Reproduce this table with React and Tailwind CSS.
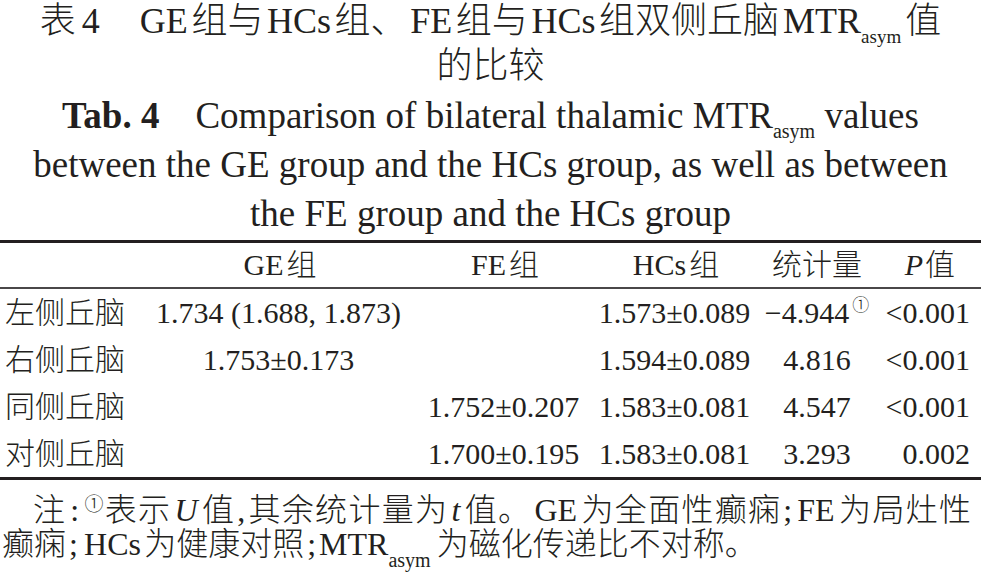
import React from "react";

const rows = [
  { label: "左侧丘脑", ge: "1.734 (1.688, 1.873)", fe: "", hc: "1.573±0.089", stat: "−4.944", mark: true, p: "<0.001" },
  { label: "右侧丘脑", ge: "1.753±0.173", fe: "", hc: "1.594±0.089", stat: "4.816", p: "<0.001" },
  { label: "同侧丘脑", ge: "", fe: "1.752±0.207", hc: "1.583±0.081", stat: "4.547", p: "<0.001" },
  { label: "对侧丘脑", ge: "", fe: "1.700±0.195", hc: "1.583±0.081", stat: "3.293", p: "0.002" },
];

// latin words sit between CJK with a small gap
function L({ children, className = "" }) {
  return <span className={"mx-[0.1em] " + className}>{children}</span>;
}

function Asym({ className = "" }) {
  return <span className={"relative leading-none " + className}>asym</span>;
}

function Caption() {
  return (
    <div className="text-center">
      <div className="text-[36px] leading-[42px] whitespace-nowrap">
        表<span className="ml-[6px]">4</span>
        <L className="ml-[40px]">GE</L>组与<L>HCs</L>组、<L>FE</L>组与<L>HCs</L>组双侧丘脑
        <span className="ml-[4px]">MTR</span>
        <Asym className="text-[19px] top-[10px]" />
        <span className="ml-[4px]">值</span>
      </div>
      <div className="text-[36px] leading-[49px]">的比较</div>
      <div className="text-[37px] leading-[49px] whitespace-nowrap">
        <span className="font-bold">Tab. 4</span>
        <span className="ml-[36px]">Comparison of bilateral thalamic MTR</span>
        <Asym className="text-[20px] top-[10px]" /> values
      </div>
      <div className="text-[37px] leading-[49px] whitespace-nowrap">
        between the GE group and the HCs group, as well as between
      </div>
      <div className="text-[37px] leading-[49px] whitespace-nowrap">
        the FE group and the HCs group
      </div>
    </div>
  );
}

function Table() {
  const cols = "grid grid-cols-[142px_273px_177px_165px_120px_104px] items-center";
  return (
    <div className="mt-[2px] text-[30px] leading-[36px] whitespace-nowrap">
      <div className="h-[3px] bg-[#231f20]" />
      <div className={cols + " h-[44px] text-center"}>
        <div />
        <div>
          <L>GE</L>组
        </div>
        <div>
          <L>FE</L>组
        </div>
        <div>
          <L>HCs</L>组
        </div>
        <div>统计量</div>
        <div className="text-right pr-[26px]">
          <span className="italic mr-[2px]">P</span>值
        </div>
      </div>
      <div className="h-[2px] bg-[#4a4748]" />
      {rows.map((r) => (
        <div key={r.label} className={cols + " h-[47px]"}>
          <div className="pl-[5px]">{r.label}</div>
          <div className="text-center">{r.ge}</div>
          <div className="text-center">{r.fe}</div>
          <div className="text-center">{r.hc}</div>
          <div className="text-center">
            {r.stat}
            {r.mark && (
              <span className="relative -top-[12px] ml-[3px] text-[17px] leading-none">①</span>
            )}
          </div>
          <div className="text-right pr-[11px]">{r.p}</div>
        </div>
      ))}
      <div className="h-[3px] bg-[#231f20]" />
    </div>
  );
}

function Note() {
  return (
    <div className="pt-[13px] text-[32px] leading-[34px] whitespace-nowrap">
      <div className="pl-[33px] pr-[10px] text-justify [text-align-last:justify]">
        注<span className="mx-[4px]">:</span>
        <span className="relative -top-[10px] text-[19px] leading-none">①</span>表示<L className="italic">U</L>值
        <span className="mx-[2px]">,</span>其余统计量为<L className="italic">t</L>值。<L>GE</L>为全面性癫痫
        <span className="mx-[2px]">;</span>
        <L>FE</L>为局灶性
      </div>
      <div className="pl-[2px]">
        癫痫<span className="mx-[3px]">;</span>
        <L>HCs</L>为健康对照<span className="mx-[3px]">;</span>
        <span>MTR</span>
        <span className="relative top-[12px] text-[20px] leading-none">asym</span>
        <span className="ml-[6px]">为磁化传递比不对称。</span>
      </div>
    </div>
  );
}

export default function App() {
  return (
    <div className="w-[981px] h-[578px] overflow-hidden bg-white text-[#231f20] font-light font-['Liberation_Serif','Noto_Sans_CJK_SC',serif]">
      <Caption />
      <Table />
      <Note />
    </div>
  );
}
